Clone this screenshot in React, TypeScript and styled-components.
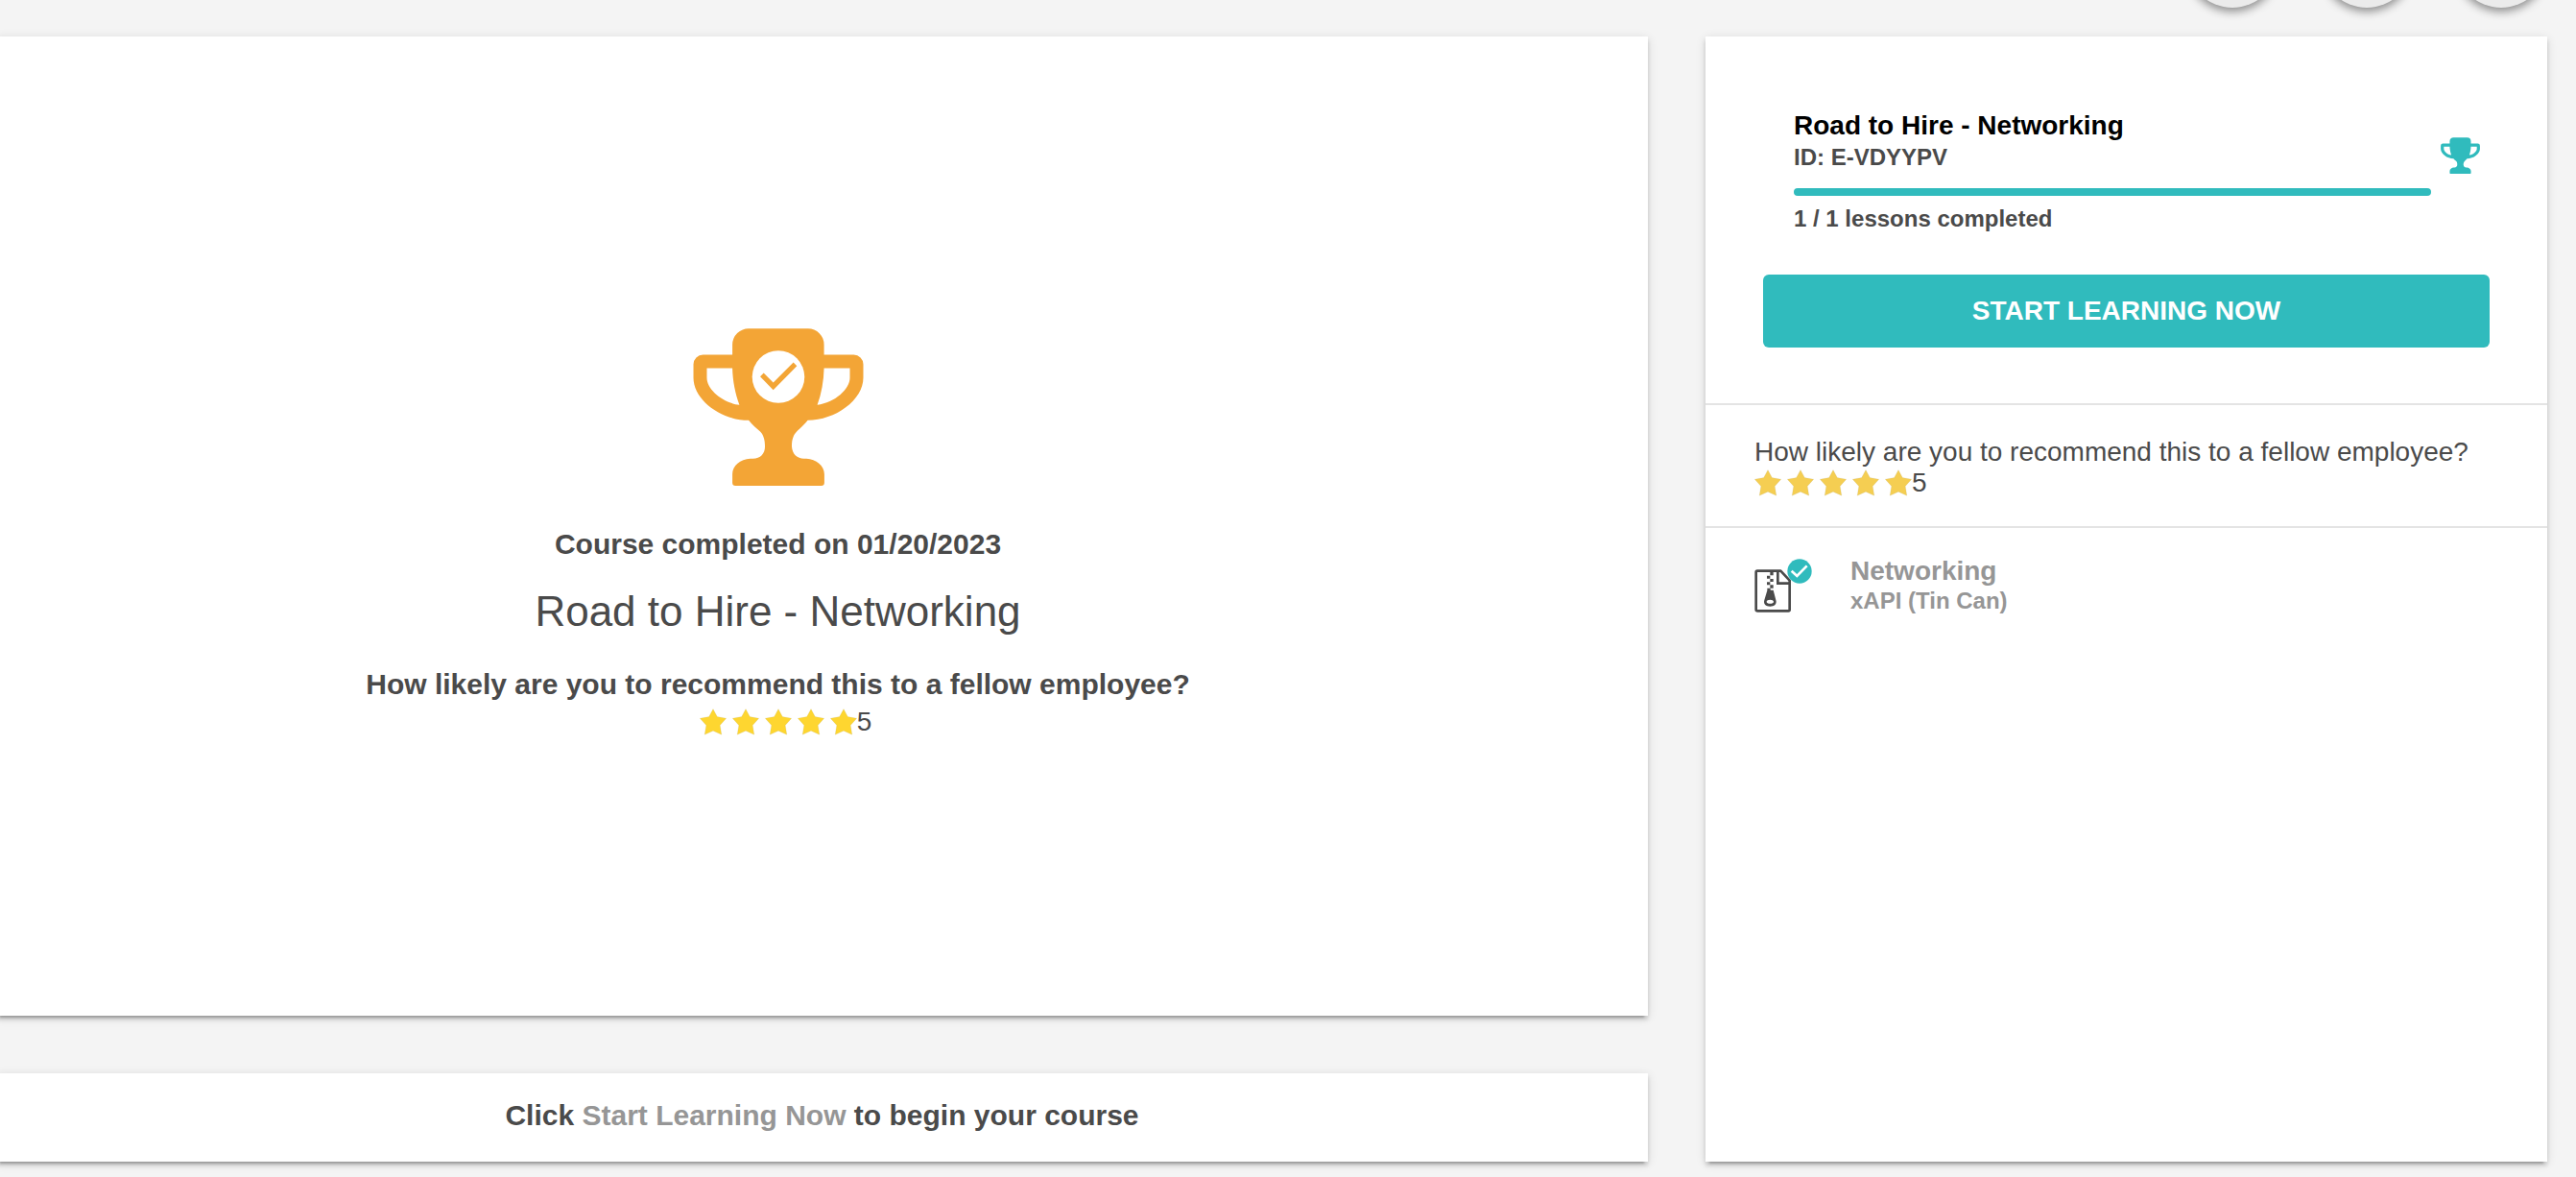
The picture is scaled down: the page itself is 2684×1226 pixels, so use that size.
import React from "react";
import styled, { createGlobalStyle } from "styled-components";

const color = {
  page: "#f4f4f4",
  text: "#4a4a4a",
  muted: "#969696",
  teal: "#30bbbd",
  orange: "#f3a536",
  line: "#e4e4e4",
};

const GlobalStyle = createGlobalStyle`
  *, *::before, *::after { box-sizing: border-box; }
  body {
    margin: 0;
    background: ${color.page};
    color: ${color.text};
    font-family: "Liberation Sans", Arial, Helvetica, sans-serif;
    font-size: 28px;
    line-height: 32px;
  }
  h1, h2, p { margin: 0; }
`;

const Page = styled.div`
  display: flex;
  flex-direction: column;
  min-height: 100vh;
  padding: 0 30px 16px 0;
  overflow: hidden;
`;

const Toolbar = styled.header`
  display: flex;
  justify-content: flex-end;
  align-items: flex-end;
  gap: 44px;
  height: 38px;
  padding-bottom: 30px;
`;

const RoundButton = styled.button`
  flex: none;
  width: 96px;
  height: 96px;
  padding: 0;
  border: 0;
  border-radius: 50%;
  background: #ebebeb;
  box-shadow: 0 4px 10px rgba(0, 0, 0, 0.42);
  cursor: pointer;
`;

const Columns = styled.div`
  flex: 1;
  display: flex;
  gap: 60px;
`;

const MainColumn = styled.main`
  flex: 1;
  min-width: 0;
  display: flex;
  flex-direction: column;
  gap: 60px;
  margin-left: -4px;
`;

const Card = styled.section`
  background: #fff;
  box-shadow: 0 6px 2px -4px rgba(0, 0, 0, 0.2), 0 4px 4px rgba(0, 0, 0, 0.14),
    0 2px 10px rgba(0, 0, 0, 0.12);
`;

const SummaryCard = styled(Card)`
  flex: 1;
  display: flex;
  flex-direction: column;
  align-items: center;
  justify-content: center;
  padding: 14px 92px 0 0;
  text-align: center;
`;

const Strong = styled.p`
  font-size: 30px;
  font-weight: 700;
  line-height: 36px;
`;

const CompletedOn = styled(Strong)`
  margin-top: 43px;
`;

const CourseTitle = styled.h1`
  margin: 26px 0 32px;
  font-size: 44px;
  font-weight: 400;
  line-height: 52px;
`;

const HintCard = styled(Card)`
  padding: 26px 20px 30px;
  text-align: center;
`;

const Hint = styled.span`
  color: ${color.muted};
`;

const SidePanel = styled(Card).attrs({ as: "aside" })`
  flex: 0 1 877px;
`;

const PanelSection = styled.section`
  border-bottom: 2px solid ${color.line};
`;

const CourseSection = styled(PanelSection)`
  padding: 77px 60px 58px;
`;

const CourseHead = styled.div`
  display: flex;
  align-items: flex-start;
  gap: 10px;
  padding: 0 10px 0 32px;

  & > svg {
    margin-top: 28px;
  }
`;

const CourseInfo = styled.div`
  flex: 1;
  min-width: 0;
`;

const CourseName = styled.h2`
  color: #000;
  font-size: 28px;
  font-weight: 700;
  line-height: 32px;
`;

const Detail = styled.p`
  font-size: 24px;
  font-weight: 700;
  line-height: 28px;
`;

const CourseId = styled(Detail)`
  margin-top: 3px;
`;

const Progress = styled.progress`
  display: block;
  width: 100%;
  height: 8px;
  margin: 18px 0 10px;
  border: 0;
  border-radius: 4px;
  overflow: hidden;
  appearance: none;
  background: ${color.line};

  &::-webkit-progress-bar {
    background: ${color.line};
  }
  &::-webkit-progress-value {
    background: ${color.teal};
  }
`;

const StartButton = styled.button`
  display: block;
  width: 100%;
  height: 76px;
  margin-top: 44px;
  padding: 0;
  border: 0;
  border-radius: 6px;
  background: ${color.teal};
  color: #fff;
  font: inherit;
  font-weight: 700;
  text-transform: uppercase;
  cursor: pointer;
`;

const RatingSection = styled(PanelSection)`
  padding: 33px 51px 29px;
`;

const RatingRow = styled.div<{ $indent?: boolean }>`
  display: flex;
  align-items: center;
  margin-top: ${(p) => (p.$indent ? "5px" : "0")};
  padding-left: ${(p) => (p.$indent ? "16px" : "0")};
`;

const StarList = styled.span`
  display: flex;
  gap: 6px;
`;

const Lesson = styled.a`
  display: flex;
  align-items: flex-start;
  gap: 40px;
  padding: 29px 51px;
  color: ${color.muted};
  font-weight: 700;
  text-decoration: none;

  & > svg {
    flex: none;
    margin-top: 3px;
  }
`;

const LessonType = styled(Detail)`
  margin-top: 1px;
`;

const CUP =
  "M300 66H485A50 50 0 0 1 535 116V148H628A30 30 0 0 1 658 178V220C658 290 570 353 484 353C468 374 446 387 440 402C435 413 434 422 434 435C436 460 451 473 472 473H480C510 475 536 495 536 522V548Q536 558 526 558H258Q248 558 248 548V522C248 495 273 474 304 473H312C336 473 350 458 350 435C350 418 347 400 335 388C325 379 309 367 299 353C213 353 126 290 126 220V178A30 30 0 0 1 156 148H248V116A50 50 0 0 1 300 66Z" +
  "M168 190V220C168 255 215 298 270 305C257 270 249 230 248 190Z" +
  "M616 190V220C616 255 569 298 514 305C527 270 534 230 535 190Z";

function Trophy({ size, fill, checked }: { size: number; fill: string; checked?: boolean }) {
  return (
    <svg width={size} height={Math.round(size * 0.922)} viewBox="125 65 534 493" aria-hidden="true">
      <path d={CUP} fill={fill} fillRule="evenodd" />
      {checked && (
        <>
          <circle cx="392" cy="217" r="82" fill="#fff" />
          <path d="M335 216L346 205L376 235L439 172L450 183L376 258Z" fill={fill} />
        </>
      )}
    </svg>
  );
}

function Rating({ value, fill, indent }: { value: number; fill: string; indent?: boolean }) {
  return (
    <RatingRow $indent={indent}>
      <StarList role="img" aria-label={`${value} stars`}>
        {Array.from({ length: value }, (_, i) => (
          <svg key={i} width="28" height="28" viewBox="0 0 28 28">
            <path
              d="M14 0.600L18.300 8.600L27.700 10.200L21.200 17.400L22.800 27.200L14 23.200L5.200 27.200L6.800 17.400L0.300 10.200L9.700 8.600Z"
              fill={fill}
              stroke="#b9b08a"
              strokeOpacity="0.3"
              strokeWidth="0.6"
            />
          </svg>
        ))}
      </StarList>
      <span>{value}</span>
    </RatingRow>
  );
}

function LessonIcon() {
  return (
    <svg width="60" height="56" viewBox="24 35 180 168" aria-hidden="true">
      <path
        d="M33 73H106L134 103V194Q134 198 130 198H34Q29 198 29 194V77Q29 73 33 73Z"
        fill="#fff"
        stroke={color.text}
        strokeWidth="8"
        strokeLinejoin="round"
      />
      <path d="M97 74V112H134" fill="none" stroke={color.text} strokeWidth="8" />
      <path
        d="M73 75h10v12h-10zM63 88h10v9h-10zM73 98h10v9h-10zM63 108h10v9h-10zM73 117h10v10h-10z"
        fill={color.text}
      />
      <path
        d="M64 127H74V133H83L91 164C95 177 86 184 73 184C60 184 51 177 55 164L64 134ZM73 163C67 163 62 165 62 169C62 173 67 175 73 175C79 175 84 173 84 169C84 165 79 163 73 163Z"
        fill={color.text}
        fillRule="evenodd"
      />
      <circle cx="165" cy="74" r="38" fill={color.teal} />
      <path d="M140 73L157 89L188 57" fill="none" stroke="#fff" strokeWidth="8" />
    </svg>
  );
}

const QUESTION = "How likely are you to recommend this to a fellow employee?";

export default function App() {
  return (
    <>
      <GlobalStyle />
      <Page>
        <Toolbar>
          <RoundButton type="button" aria-label="Share" />
          <RoundButton type="button" aria-label="Save" />
          <RoundButton type="button" aria-label="Close" />
        </Toolbar>
        <Columns>
          <MainColumn>
            <SummaryCard>
              <Trophy size={178} fill={color.orange} checked />
              <CompletedOn>Course completed on 01/20/2023</CompletedOn>
              <CourseTitle>Road to Hire - Networking</CourseTitle>
              <Strong>{QUESTION}</Strong>
              <Rating value={5} fill="#fed630" indent />
            </SummaryCard>
            <HintCard>
              <Strong>
                Click <Hint>Start Learning Now</Hint> to begin your course
              </Strong>
            </HintCard>
          </MainColumn>
          <SidePanel>
            <CourseSection>
              <CourseHead>
                <CourseInfo>
                  <CourseName>Road to Hire - Networking</CourseName>
                  <CourseId>ID: E-VDYYPV</CourseId>
                  <Progress value={1} max={1} aria-label="Lessons completed" />
                  <Detail>1 / 1 lessons completed</Detail>
                </CourseInfo>
                <Trophy size={41} fill={color.teal} />
              </CourseHead>
              <StartButton type="button">Start Learning Now</StartButton>
            </CourseSection>
            <RatingSection>
              <p>{QUESTION}</p>
              <Rating value={5} fill="#f5ce52" />
            </RatingSection>
            <Lesson href="#networking">
              <LessonIcon />
              <div>
                <p>Networking</p>
                <LessonType>xAPI (Tin Can)</LessonType>
              </div>
            </Lesson>
          </SidePanel>
        </Columns>
      </Page>
    </>
  );
}
